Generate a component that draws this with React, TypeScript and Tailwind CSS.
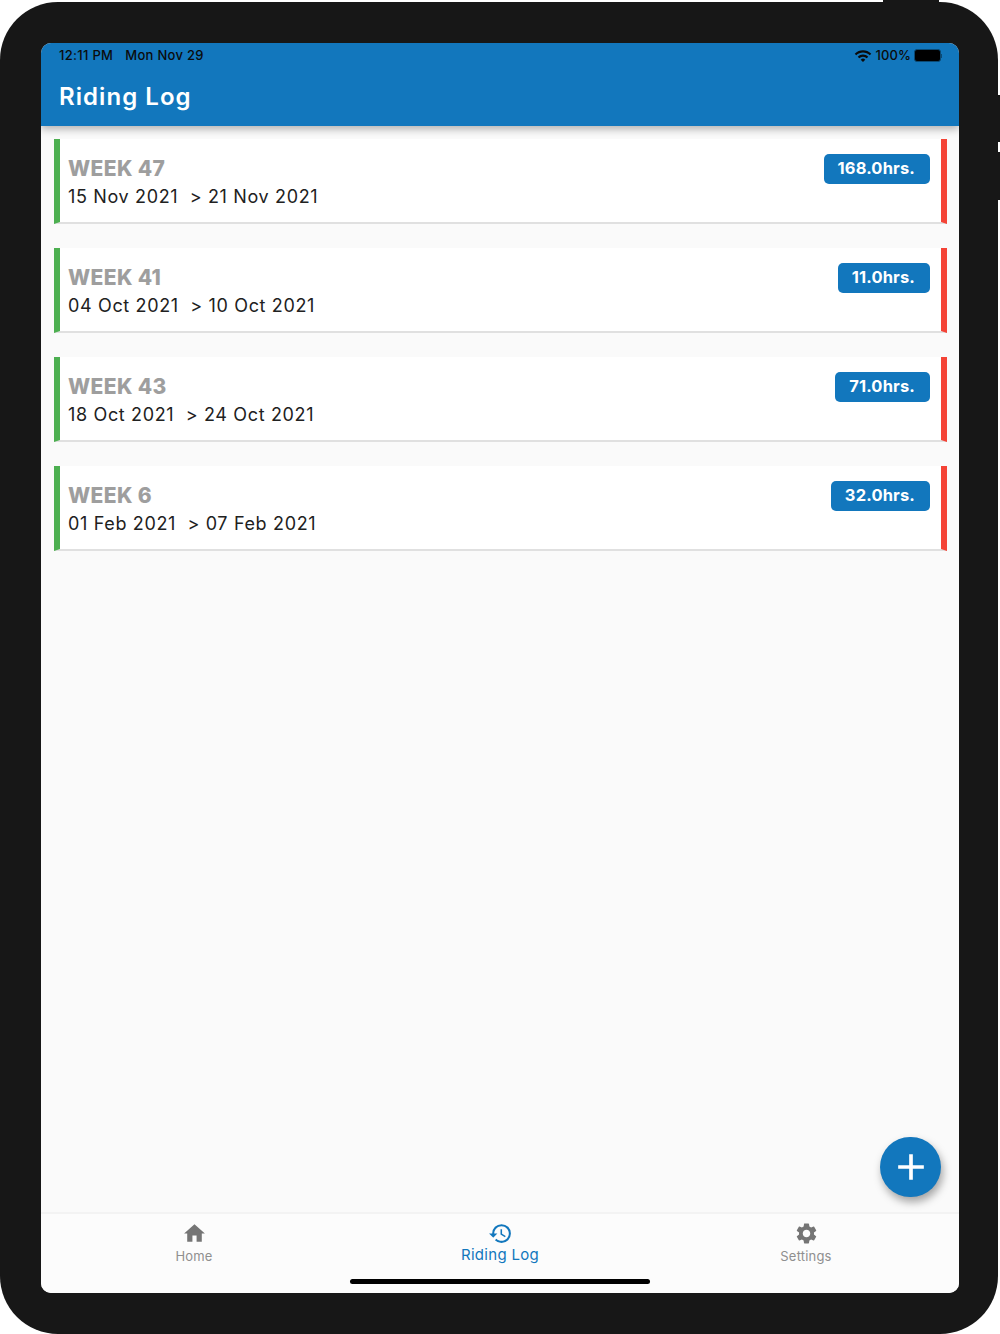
import React from 'react';
import { MdHome, MdHistory, MdSettings, MdAdd, MdWifi } from 'react-icons/md';

const weeks = [
  { title: 'WEEK 47', range: '15 Nov 2021\u00a0\u00a0> 21 Nov 2021', hours: '168.0hrs.' },
  { title: 'WEEK 41', range: '04 Oct 2021\u00a0\u00a0> 10 Oct 2021', hours: '11.0hrs.' },
  { title: 'WEEK 43', range: '18 Oct 2021\u00a0\u00a0> 24 Oct 2021', hours: '71.0hrs.' },
  { title: 'WEEK 6', range: '01 Feb 2021\u00a0\u00a0> 07 Feb 2021', hours: '32.0hrs.' },
];

const WeekCard = ({ title, range, hours }: { title: string; range: string; hours: string }) => (
  <div className="flex h-[84.5px] justify-between border-b-2 border-[#e0e0e0] border-l-[6px] border-l-[#4caf50] border-r-[6px] border-r-[#f44336] bg-white pl-[8px] pr-[11px] pt-[15px]">
    <div>
      <div className="mt-[1px] text-[21px] leading-[28px] font-extrabold tracking-[0.35px] text-[#9e9e9e]">{title}</div>
      <div className="text-[18px] leading-[28px] tracking-[0.65px] text-[#212121]">{range}</div>
    </div>
    <div className="h-[30px] rounded-[5px] bg-[#1277bd] pl-[14px] pr-[15px] text-[16.5px] leading-[29px] font-bold tracking-[0.15px] text-white">{hours}</div>
  </div>
);

const Tab = ({ icon, label, active }: { icon: React.ReactNode; label: string; active?: boolean }) => (
  <div className={`flex flex-col items-center pt-[7px] ${active ? 'text-[#1277bd]' : 'text-[#757575]'}`}>
    {icon}
    <span className={active ? 'text-[15px] leading-[18px] tracking-[0.3px]' : 'text-[13px] leading-[20px] tracking-[0.2px] text-[#8f8f8f]'}>{label}</span>
  </div>
);

export default function App() {
  return (
    <div className="relative h-[1334px] w-[1000px] overflow-hidden bg-white font-['Inter',sans-serif]">
      {/* hardware buttons */}
      <div className="absolute left-[883px] top-0 h-[4px] w-[56px] bg-[#171717]" />
      <div className="absolute left-[990px] top-[95px] h-[47px] w-[10px] bg-[#171717]" />
      <div className="absolute left-[990px] top-[152px] h-[48px] w-[10px] bg-[#171717]" />

      <div className="relative mt-[2px] h-[1332px] w-[998px] rounded-[58px] bg-[#171717] px-[41px] pt-[41px]">
        <div className="relative flex h-[1250px] w-[918px] flex-col overflow-hidden rounded-[10px] bg-[#fafafa]">
          <header className="relative z-10 h-[83px] bg-[#1277bd] shadow-[0_3px_8px_rgba(0,0,0,0.3)]">
            <div className="flex h-[25px] items-center justify-between pl-[18px] pr-[17px] text-[13px] text-[#0b0b0b]">
              <div className="flex gap-[12px] font-medium tracking-[0.3px]">
                <span>12:11 PM</span>
                <span>Mon Nov 29</span>
              </div>
              <div className="flex items-center gap-[3px]">
                <MdWifi className="h-[18px] w-[18px]" />
                <span className="ml-[1px] font-medium tracking-[0.1px]">100%</span>
                <div className="flex items-center">
                  <div className="h-[13px] w-[27px] rounded-[3px] border border-[#0b4a75] bg-black" />
                  <div className="h-[4px] w-[1px] bg-[#0b4a75]" />
                </div>
              </div>
            </div>
            <h1 className="mt-[13px] pl-[18px] text-[24px] leading-[32px] font-semibold tracking-[1.05px] text-white">Riding Log</h1>
          </header>

          <main className="flex flex-1 flex-col gap-[24.5px] pl-[13px] pr-[12px] pt-[13px]">
            {weeks.map((w) => (
              <WeekCard key={w.title} {...w} />
            ))}
          </main>

          <button className="absolute left-[839px] top-[1094px] flex h-[60px] w-[61px] items-center justify-center rounded-full bg-[#1277bd] text-white shadow-[2px_5px_8px_rgba(0,0,0,0.35)]">
            <MdAdd className="h-[44px] w-[44px]" />
          </button>

          <nav className="relative h-[81px] border-t-2 border-[#f3f3f3] bg-[#fcfcfc]">
            <div className="grid grid-cols-3">
              <Tab icon={<MdHome className="h-[25px] w-[25px]" />} label="Home" />
              <Tab active icon={<MdHistory className="h-[25px] w-[25px]" />} label="Riding Log" />
              <Tab icon={<MdSettings className="h-[25px] w-[25px]" />} label="Settings" />
            </div>
            <div className="absolute left-[309px] top-[65px] h-[5px] w-[300px] rounded-full bg-black" />
          </nav>
        </div>
      </div>
    </div>
  );
}
